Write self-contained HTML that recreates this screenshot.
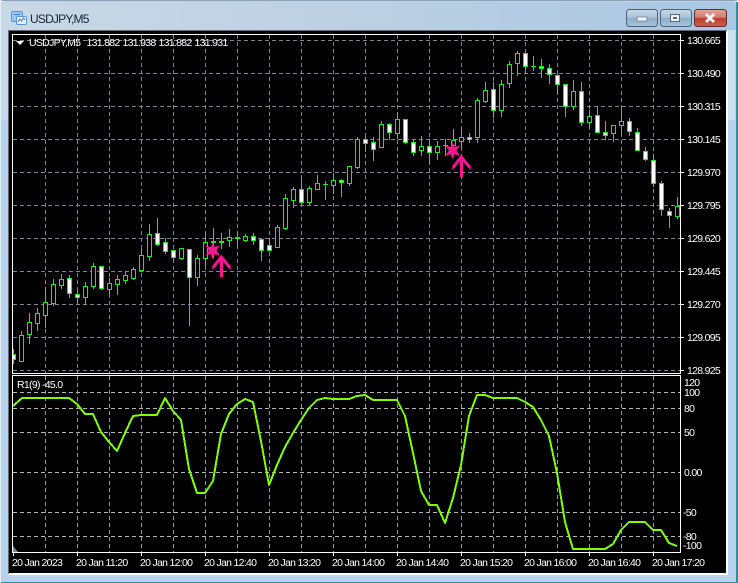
<!DOCTYPE html>
<html><head><meta charset="utf-8"><style>
html,body{margin:0;padding:0;background:#fff}
svg{display:block}
text{font-family:"Liberation Sans",sans-serif;font-size:10.5px;fill:#fff;letter-spacing:-.7px}
.g{stroke-dasharray:4 3;fill:none;shape-rendering:crispEdges;stroke-width:1}
.c{shape-rendering:crispEdges}
</style></head><body>
<svg width="738" height="583" viewBox="0 0 738 583" xmlns="http://www.w3.org/2000/svg">
<defs>
<linearGradient id="tb" x1="0" x2="1" y1="0" y2="0"><stop offset="0" stop-color="#c9d8e6"/><stop offset=".5" stop-color="#bcd0e3"/><stop offset="1" stop-color="#a9c7e2"/></linearGradient>
<linearGradient id="bt" x1="0" x2="0" y1="0" y2="1"><stop offset="0" stop-color="#c8d9e8"/><stop offset=".48" stop-color="#a9c2d9"/><stop offset=".5" stop-color="#8fadc9"/><stop offset="1" stop-color="#a8c4dd"/></linearGradient>
<linearGradient id="cl" x1="0" x2="0" y1="0" y2="1"><stop offset="0" stop-color="#dfa79f"/><stop offset=".48" stop-color="#cf7a6c"/><stop offset=".5" stop-color="#bd3d2e"/><stop offset="1" stop-color="#c9604f"/></linearGradient>
<clipPath id="m"><rect x="13" y="34" width="667" height="339"/></clipPath>
</defs>
<!-- window -->
<path d="M0 583V6Q0 1 6 1H732Q738 1 738 6V583Z" fill="#b8d2eb"/>
<path d="M1 30V7Q1 2 7 2H731Q737 2 737 7V30Z" fill="url(#tb)"/>
<rect x="1" y="0" width="736" height="1" fill="#8fa3b5"/>
<rect x="728" y="30" width="7" height="90" fill="#cfe0ef"/>
<rect x="1" y="30" width="7" height="90" fill="#c6d9ea"/>
<rect x="0" y="582" width="738" height="1" fill="#2f8f9f"/>
<rect x="736" y="2" width="2" height="581" fill="#2f8f9f"/>
<rect x="0" y="2" width="1" height="581" fill="#e8f0f6"/>
<rect x="8" y="30" width="720" height="545" fill="#ffffff"/>
<rect x="8" y="30" width="719" height="1" fill="#5f6b78"/>
<rect x="8" y="30" width="1" height="544" fill="#5f6b78"/>
<rect x="9" y="31" width="717" height="542" fill="#000"/>
<!-- title icon -->
<rect x="11.5" y="11.5" width="11" height="10" rx="1.5" fill="#9cc4ee" stroke="#5b94d6"/>
<rect x="16.5" y="16.5" width="10" height="8" rx="1.5" fill="#e8f3fd" stroke="#5b94d6"/>
<path d="M18 22l2-3 1.500 2 2-3 1.500 2M14 14.500h6" fill="none" stroke="#3f7fc8"/>
<text x="30" y="23" style="font-size:12px;fill:#1b2530;letter-spacing:-.8px">USDJPY,M5</text>
<!-- buttons -->
<rect x="626.500" y="9.500" width="31" height="17" rx="3" fill="url(#bt)" stroke="#4f6478"/>
<rect x="637" y="17" width="10" height="4" fill="#f0f3f6" stroke="#55687a" stroke-width=".6"/>
<rect x="660.500" y="9.500" width="31" height="17" rx="3" fill="url(#bt)" stroke="#4f6478"/>
<rect x="670.500" y="14.500" width="9" height="7" fill="#eef2f6" stroke="#55687a"/>
<rect x="673" y="17" width="4" height="2" fill="#55687a"/>
<rect x="694.500" y="9.500" width="32" height="17" rx="3" fill="url(#cl)" stroke="#6b2a28"/>
<path d="M706 14l8 8M714 14l-8 8" stroke="#f4f1ef" stroke-width="3"/>
<!-- grid main -->
<path class="g" stroke="#778899" d="M13 40.500H680M13 73.500H680M13 106.500H680M13 139.500H680M13 172.500H680M13 205.500H680M13 238.500H680M13 271.500H680M13 304.500H680M13 337.500H680M13 370.500H680"/>
<path class="g" stroke="#778899" d="M45.500 35V373M77.500 35V373M109.500 35V373M141.500 35V373M173.500 35V373M205.500 35V373M237.500 35V373M269.500 35V373M301.500 35V373M333.500 35V373M365.500 35V373M397.500 35V373M429.500 35V373M461.500 35V373M493.500 35V373M525.500 35V373M557.500 35V373M589.500 35V373M621.500 35V373M653.500 35V373"/>
<!-- grid sub -->
<path class="g" stroke="#b4b8bc" d="M13 392.500H680M13 408.500H680M13 432.500H680M13 472.500H680M13 512.500H680M13 536.500H680"/>
<path class="g" stroke="#8c9aa8" d="M45.500 376V552M77.500 376V552M109.500 376V552M141.500 376V552M173.500 376V552M205.500 376V552M237.500 376V552M269.500 376V552M301.500 376V552M333.500 376V552M365.500 376V552M397.500 376V552M429.500 376V552M461.500 376V552M493.500 376V552M525.500 376V552M557.500 376V552M589.500 376V552M621.500 376V552M653.500 376V552"/>
<!-- candles -->
<g clip-path="url(#m)" class="c">
<path fill="none" stroke="#0f0" d="M13.500 349V364M21.500 331V362M29.500 313V344M37.500 308V331M45.500 287V328M53.500 279V306M61.500 274V289M69.500 275V298M77.500 291V304M85.500 282V305M93.500 263V289M101.500 266V290M109.500 278V295M117.500 275V295M125.500 271V284M133.500 267V280M141.500 249V271M149.500 224V261M157.500 218V246M165.500 238V254M173.500 250V260M181.500 248V260M189.500 249V326M197.500 255V286M205.500 232V266M213.500 228V258M221.500 233V249M229.500 229V247M237.500 232V248M245.500 234V242M253.500 233V245M261.500 238V261M269.500 238V251M277.500 225V248M285.500 194V230M293.500 187V208M301.500 178V203M309.500 186V205M317.500 175V190M325.500 181V200M333.500 173V194M341.500 179V197M349.500 166V186M357.500 137V169M365.500 136V152M373.500 137V161M381.500 121V148M389.500 123V140M397.500 112V139M405.500 119V144M413.500 140V156M421.500 136V156M429.500 139V164M437.500 141V160M445.500 139V156M453.500 129V151M461.500 130V148M469.500 133V143M477.500 98V143M485.500 82V103M493.500 82V118M501.500 80V117M509.500 61V88M517.500 51V76M525.500 51V74M533.500 56V71M541.500 59V78M549.500 64V84M557.500 74V94M565.500 84V117M573.500 80V110M581.500 82V126M589.500 110V128M597.500 106V133M605.500 121V140M613.500 125V142M621.500 108V136M629.500 118V136M637.500 128V151M645.500 147V161M653.500 154V187M661.500 181V216M669.500 208V228M677.500 197V219M323 184.500H328M443 145.500H448M531 66.500H536"/>
<path fill="#000" stroke="#0f0" d="M19.500 335.500h4v26h-4zM27.500 322.500h4v12h-4zM35.500 313.500h4v10h-4zM43.500 302.500h4v13h-4zM51.500 284.500h4v19h-4zM59.500 279.500h4v6h-4zM83.500 286.500h4v11h-4zM91.500 266.500h4v20h-4zM107.500 283.500h4v6h-4zM115.500 279.500h4v5h-4zM123.500 275.500h4v5h-4zM131.500 269.500h4v9h-4zM139.500 255.500h4v15h-4zM147.500 234.500h4v22h-4zM179.500 248.500h4v10h-4zM195.500 258.500h4v19h-4zM203.500 242.500h4v16h-4zM227.500 237.500h4v3h-4zM243.500 236.500h4v4h-4zM275.500 227.500h4v20h-4zM283.500 198.500h4v30h-4zM291.500 189.500h4v11h-4zM307.500 188.500h4v14h-4zM315.500 183.500h4v6h-4zM331.500 180.500h4v5h-4zM347.500 166.500h4v17h-4zM355.500 139.500h4v28h-4zM379.500 124.500h4v23h-4zM395.500 119.500h4v14h-4zM419.500 146.500h4v4h-4zM435.500 146.500h4v6h-4zM451.500 140.500h4v5h-4zM459.500 137.500h4v4h-4zM475.500 100.500h4v37h-4zM483.500 90.500h4v11h-4zM499.500 84.500h4v26h-4zM507.500 64.500h4v19h-4zM515.500 53.500h4v10h-4zM571.500 91.500h4v15h-4zM587.500 116.500h4v6h-4zM611.500 125.500h4v8h-4zM619.500 121.500h4v4h-4zM675.500 206.500h4v10h-4z"/>
<path fill="#fff" stroke="#0f0" d="M11.500 354.500h4v5h-4zM67.500 278.500h4v15h-4zM75.500 294.500h4v3h-4zM99.500 266.500h4v22h-4zM155.500 233.500h4v11h-4zM163.500 242.500h4v9h-4zM171.500 250.500h4v7h-4zM187.500 249.500h4v28h-4zM211.500 241.500h4v1h-4zM219.500 241.500h4v1h-4zM235.500 237.500h4v1h-4zM251.500 236.500h4v4h-4zM259.500 239.500h4v11h-4zM267.500 245.500h4v5h-4zM299.500 189.500h4v13h-4zM339.500 180.500h4v2h-4zM363.500 139.500h4v4h-4zM371.500 142.500h4v7h-4zM387.500 124.500h4v8h-4zM403.500 119.500h4v23h-4zM411.500 142.500h4v10h-4zM427.500 146.500h4v6h-4zM467.500 137.500h4v2h-4zM491.500 89.500h4v21h-4zM523.500 53.500h4v13h-4zM539.500 66.500h4v2h-4zM547.500 68.500h4v6h-4zM555.500 75.500h4v9h-4zM563.500 84.500h4v22h-4zM579.500 91.500h4v31h-4zM595.500 115.500h4v17h-4zM603.500 132.500h4v3h-4zM627.500 121.500h4v10h-4zM635.500 132.500h4v18h-4zM643.500 151.500h4v8h-4zM651.500 160.500h4v23h-4zM659.500 183.500h4v26h-4zM667.500 211.500h4v4h-4z"/>
</g>
<!-- markers -->
<g>
<path d="M212.700 242l1.800 5 5.500-1.500-3.500 5 3.500 5-5.500-1.300-1.800 5.300-1.800-5.300-5.500 1.300 3.500-5-3.500-5 5.500 1.500z" fill="#ff1493"/>
<path d="M212 268L221.200 255.500 231 268" fill="none" stroke="#a8008c" stroke-width="2" transform="translate(0,1.500)"/>
<path d="M213 267.500L221.200 257 230 267.500" fill="none" stroke="#ff1493" stroke-width="3"/>
<rect x="220" y="258" width="3" height="19" fill="#ff1493"/>
</g>
<g transform="translate(240,-100)">
<path d="M212.700 242l1.800 5 5.500-1.500-3.500 5 3.500 5-5.500-1.300-1.800 5.300-1.800-5.300-5.500 1.300 3.500-5-3.500-5 5.500 1.500z" fill="#ff1493"/>
<path d="M212 268L221.200 255.500 231 268" fill="none" stroke="#a8008c" stroke-width="2" transform="translate(0,1.500)"/>
<path d="M213 267.500L221.200 257 230 267.500" fill="none" stroke="#ff1493" stroke-width="3"/>
<rect x="220" y="258" width="3" height="19" fill="#ff1493"/>
</g>
<!-- indicator line -->
<polyline fill="none" stroke="#7fff00" stroke-width="2" stroke-linejoin="round" shape-rendering="crispEdges" points="13,406 22,398 69,398 77,404 85,414 93,414 101,432 109,442 117,451 125,433 133,416 141,415 157,415 165,398 173,411 181,420 189,469 197,493 205,493 213,481 221,434 229,414 237,404 245,399 253,402 261,441 269,485 277,465 285,447 293,433 301,420 309,408 317,400 325,398 333,399 349,399 357,396 365,395 373,400 397,400 405,416 413,453 421,491 429,505 437,505 445,523 453,498 461,465 469,416 477,395 485,395 493,398 517,398 525,402 533,407 541,420 549,436 557,473 565,522 573,549 605,549 613,544 621,530 629,522 645,522 653,530 661,530 669,543 677,546"/>
<!-- frames -->
<path class="c" fill="none" stroke="#fff" d="M12.500 34.500H680.500V373.500H12.500ZM12.500 375.500H680.500V552.500H12.500Z"/>
<path class="c" fill="none" stroke="#fff" d="M681 40.500h3M681 73.500h3M681 106.500h3M681 139.500h3M681 172.500h3M681 205.500h3M681 238.500h3M681 271.500h3M681 304.500h3M681 337.500h3M681 370.500h3M13.500 553v3M77.500 553v3M141.500 553v3M205.500 553v3M269.500 553v3M333.500 553v3M397.500 553v3M461.500 553v3M525.500 553v3M589.500 553v3M653.500 553v3"/>
<path d="M13 546L18 552H13Z" fill="#778899"/>
<path d="M16 41H24L20 45Z" fill="#fff"/>
<!-- labels -->
<text x="29" y="46">USDJPY,M5</text>
<text x="86.500" y="46">131.882</text><text x="122.500" y="46">131.938</text><text x="158.500" y="46">131.882</text><text x="194.500" y="46">131.931</text>
<text x="687" y="44">130.665</text><text x="687" y="77">130.490</text><text x="687" y="110">130.315</text><text x="687" y="143">130.145</text><text x="687" y="176">129.970</text><text x="687" y="209">129.795</text><text x="687" y="242">129.620</text><text x="687" y="275">129.445</text><text x="687" y="308">129.270</text><text x="687" y="341">129.095</text><text x="687" y="374">128.925</text>
<text x="17" y="388">R1(9) -45.0</text>
<text x="684" y="386">120</text><text x="684" y="396">100</text><text x="684" y="412">80</text><text x="684" y="436">50</text><text x="684" y="476">0.00</text><text x="683" y="516">-50</text><text x="683" y="540">-80</text><text x="683" y="549">-100</text>
<text x="12" y="566">20 Jan 2023</text><text x="76" y="566">20 Jan 11:20</text><text x="140" y="566">20 Jan 12:00</text><text x="204" y="566">20 Jan 12:40</text><text x="268" y="566">20 Jan 13:20</text><text x="332" y="566">20 Jan 14:00</text><text x="396" y="566">20 Jan 14:40</text><text x="460" y="566">20 Jan 15:20</text><text x="524" y="566">20 Jan 16:00</text><text x="588" y="566">20 Jan 16:40</text><text x="652" y="566">20 Jan 17:20</text>
</svg>
</body></html>
